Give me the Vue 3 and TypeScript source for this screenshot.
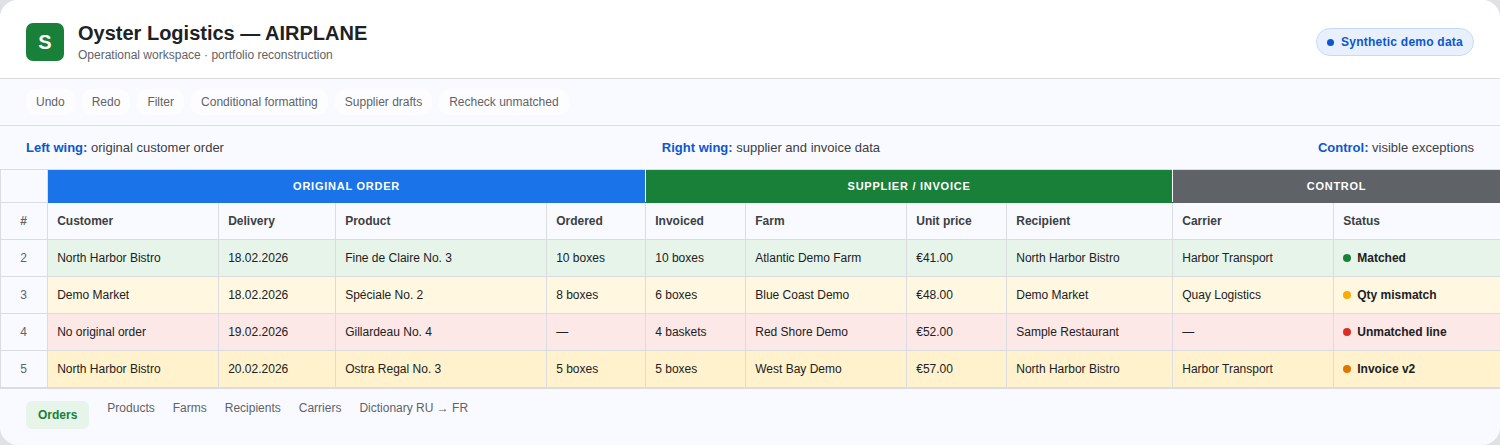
<template>
  <div class="sheet-app">
    <header class="app-header">
      <div class="brand">
        <div class="logo">S</div>
        <div>
          <h1>Oyster Logistics — AIRPLANE</h1>
          <p>Operational workspace · portfolio reconstruction</p>
        </div>
      </div>
      <span class="demo-pill"><i></i>Synthetic demo data</span>
    </header>

    <div class="toolbar">
      <button v-for="action in actions" :key="action" type="button">{{ action }}</button>
    </div>

    <div class="legend">
      <span><b>Left wing:</b> original customer order</span>
      <span><b>Right wing:</b> supplier and invoice data</span>
      <span><b>Control:</b> visible exceptions</span>
    </div>

    <table class="grid">
      <colgroup>
        <col v-for="(width, i) in columnWidths" :key="i" :style="{ width: width + 'px' }" />
      </colgroup>
      <thead>
        <tr class="bands">
          <th class="corner"></th>
          <th colspan="4" class="band-blue">ORIGINAL ORDER</th>
          <th colspan="4" class="band-green">SUPPLIER / INVOICE</th>
          <th colspan="2" class="band-grey">CONTROL</th>
        </tr>
        <tr class="labels">
          <th class="num">#</th>
          <th v-for="label in labels" :key="label">{{ label }}</th>
        </tr>
      </thead>
      <tbody>
        <tr v-for="row in rows" :key="row.id" :class="row.tone">
          <td class="num">{{ row.id }}</td>
          <td v-for="(cell, i) in row.cells" :key="i">{{ cell }}</td>
          <td class="status"><i :class="row.dot"></i>{{ row.status }}</td>
        </tr>
      </tbody>
    </table>

    <nav class="tabs">
      <a class="active">Orders</a>
      <a v-for="tab in tabs" :key="tab">{{ tab }}</a>
    </nav>
  </div>
</template>

<script setup lang="ts">
type Row = {
  id: number;
  tone: string;
  dot: string;
  status: string;
  cells: string[];
};

const actions = ["Undo", "Redo", "Filter", "Conditional formatting", "Supplier drafts", "Recheck unmatched"];
const tabs = ["Products", "Farms", "Recipients", "Carriers", "Dictionary RU → FR"];
const columnWidths = [47, 171, 117, 211, 99, 100, 161, 100, 166, 161, 167];
const labels = [
  "Customer",
  "Delivery",
  "Product",
  "Ordered",
  "Invoiced",
  "Farm",
  "Unit price",
  "Recipient",
  "Carrier",
  "Status",
];

const rows: Row[] = [
  {
    id: 2,
    tone: "ok",
    dot: "dot-green",
    status: "Matched",
    cells: [
      "North Harbor Bistro",
      "18.02.2026",
      "Fine de Claire No. 3",
      "10 boxes",
      "10 boxes",
      "Atlantic Demo Farm",
      "€41.00",
      "North Harbor Bistro",
      "Harbor Transport",
    ],
  },
  {
    id: 3,
    tone: "warn",
    dot: "dot-yellow",
    status: "Qty mismatch",
    cells: [
      "Demo Market",
      "18.02.2026",
      "Spéciale No. 2",
      "8 boxes",
      "6 boxes",
      "Blue Coast Demo",
      "€48.00",
      "Demo Market",
      "Quay Logistics",
    ],
  },
  {
    id: 4,
    tone: "bad",
    dot: "dot-red",
    status: "Unmatched line",
    cells: [
      "No original order",
      "19.02.2026",
      "Gillardeau No. 4",
      "—",
      "4 baskets",
      "Red Shore Demo",
      "€52.00",
      "Sample Restaurant",
      "—",
    ],
  },
  {
    id: 5,
    tone: "version",
    dot: "dot-orange",
    status: "Invoice v2",
    cells: [
      "North Harbor Bistro",
      "20.02.2026",
      "Ostra Regal No. 3",
      "5 boxes",
      "5 boxes",
      "West Bay Demo",
      "€57.00",
      "North Harbor Bistro",
      "Harbor Transport",
    ],
  },
];
</script>

<style>
html,
body {
  margin: 0;
  background: #dfe1e5;
}
</style>

<style scoped>
.sheet-app {
  width: 1500px;
  height: 445px;
  box-sizing: border-box;
  overflow: hidden;
  border-radius: 18px;
  background: #f8faff;
  color: #202124;
  font-family: "Liberation Sans", Arial, sans-serif;
  font-size: 12px;
}

.app-header {
  height: 79px;
  box-sizing: border-box;
  display: flex;
  align-items: center;
  justify-content: space-between;
  padding: 6px 26px 0;
  background: #fff;
  border-bottom: 1px solid #dadce0;
}

.brand {
  display: flex;
  align-items: center;
  gap: 14px;
}

.logo {
  width: 38px;
  height: 38px;
  border-radius: 7px;
  display: flex;
  align-items: center;
  justify-content: center;
  background: #188038;
  color: #fff;
  font-size: 20px;
  font-weight: 700;
}

.brand h1 {
  margin: 0;
  font-size: 20px;
  line-height: 24px;
  font-weight: 700;
}

.brand p {
  margin: 3px 0 0;
  font-size: 12px;
  line-height: 15px;
  color: #5f6368;
}

.demo-pill {
  display: inline-flex;
  align-items: center;
  gap: 7px;
  height: 28px;
  box-sizing: border-box;
  padding: 0 10px;
  border: 1px solid #c6dafc;
  border-radius: 999px;
  background: #e8f0fe;
  color: #0b57d0;
  font-weight: 700;
  letter-spacing: 0.02em;
}

.demo-pill i {
  width: 7px;
  height: 7px;
  border-radius: 50%;
  background: #0b57d0;
}

.toolbar {
  height: 47px;
  box-sizing: border-box;
  display: flex;
  align-items: center;
  gap: 7px;
  padding: 0 26px;
  border-bottom: 1px solid #dadce0;
}

.toolbar button {
  height: 26px;
  padding: 0 10px;
  border: 0;
  border-radius: 10px;
  background: #fdfdff;
  color: #5f6368;
  font: inherit;
}

.legend {
  height: 43px;
  box-sizing: border-box;
  display: flex;
  align-items: center;
  justify-content: space-between;
  padding: 0 26px;
  font-size: 13px;
  color: #3c4043;
}

.legend b {
  color: #0b57d0;
}

.grid {
  width: 1500px;
  table-layout: fixed;
  border-collapse: collapse;
  border-top: 1px solid #dadce0;
  border-bottom: 2px solid #dadce0;
}

.grid th,
.grid td {
  box-sizing: border-box;
  padding: 0 9.2px;
  border: 1px solid #dadce0;
  text-align: left;
  font-weight: 400;
  white-space: nowrap;
}

.grid .bands th {
  height: 33px;
  border-top: 0;
  text-align: center;
  color: #fff;
  font-size: 11px;
  font-weight: 700;
  letter-spacing: 0.068em;
}

.grid .bands .corner {
  background: #f8faff;
}

.grid .bands .band-blue {
  background: #1a73e8;
  border-color: #1a73e8 #fff #1a73e8 #1a73e8;
}

.grid .bands .band-green {
  background: #188038;
  border-color: #188038 #fff #188038 #fff;
}

.grid .bands .band-grey {
  background: #5f6368;
  border-color: #5f6368 #dadce0 #5f6368 #5f6368;
}

.grid .labels th {
  height: 37px;
  color: #3c4043;
  font-weight: 700;
}

.grid td {
  height: 37px;
  color: #202124;
}

.grid .num {
  padding: 0 1px 0 0;
  text-align: center;
  color: #5f6368;
  background: #f8faff;
}

.grid .labels .num {
  color: #5f6368;
}

.grid tbody tr:last-child td {
  border-bottom: 0;
}

.ok td {
  background: #e6f4ea;
}

.warn td {
  background: #fff7e0;
}

.bad td {
  background: #fce8e6;
}

.version td {
  background: #fff2cc;
}

.grid .status {
  font-weight: 700;
}

.status i {
  display: inline-block;
  width: 8px;
  height: 8px;
  margin-right: 6px;
  border-radius: 50%;
}

.dot-green {
  background: #188038;
}

.dot-yellow {
  background: #f9ab00;
}

.dot-red {
  background: #d93025;
}

.dot-orange {
  background: #e37400;
}

.tabs {
  display: flex;
  align-items: flex-start;
  gap: 18px;
  padding: 12px 26px 0;
  color: #5f6368;
}

.tabs a {
  line-height: 15px;
}

.tabs .active {
  padding: 7px 12px 6px;
  border-radius: 6px;
  background: #e6f4ea;
  color: #188038;
  font-weight: 700;
}
</style>
